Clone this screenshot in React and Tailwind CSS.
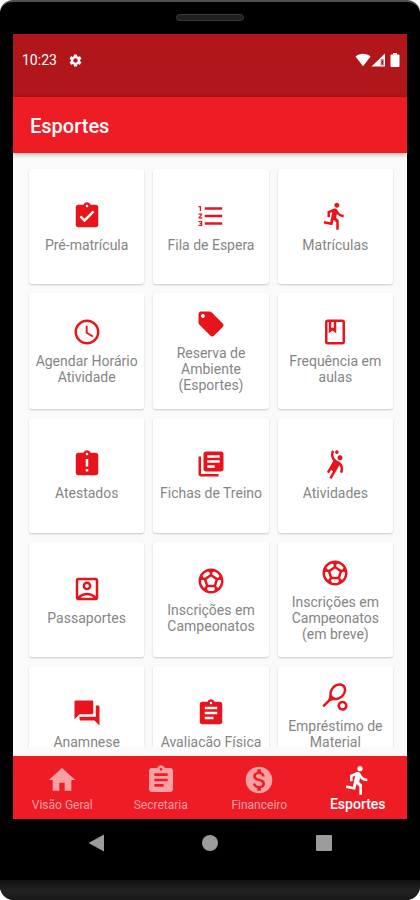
import React from "react";
import {
  MdAccessTime,
  MdAssignment,
  MdAssignmentLate,
  MdAssignmentTurnedIn,
  MdDirectionsRun,
  MdFormatListNumbered,
  MdHome,
  MdLibraryBooks,
  MdLocalOffer,
  MdMonetizationOn,
  MdOutlineAccountBox,
  MdOutlineClass,
  MdQuestionAnswer,
  MdSettings,
  MdSportsHandball,
  MdSportsSoccer,
  MdSportsTennis,
} from "react-icons/md";

const activities = [
  { label: "Pré-matrícula", Icon: MdAssignmentTurnedIn },
  { label: "Fila de Espera", Icon: MdFormatListNumbered },
  { label: "Matrículas", Icon: MdDirectionsRun },
  { label: "Agendar Horário Atividade", Icon: MdAccessTime },
  { label: "Reserva de Ambiente (Esportes)", Icon: MdLocalOffer },
  { label: "Frequência em aulas", Icon: MdOutlineClass },
  { label: "Atestados", Icon: MdAssignmentLate },
  { label: "Fichas de Treino", Icon: MdLibraryBooks },
  { label: "Atividades", Icon: MdSportsHandball },
  { label: "Passaportes", Icon: MdOutlineAccountBox },
  { label: "Inscrições em Campeonatos", Icon: MdSportsSoccer },
  { label: "Inscrições em Campeonatos (em breve)", Icon: MdSportsSoccer },
  { label: "Anamnese", Icon: MdQuestionAnswer },
  { label: "Avaliação Física", Icon: MdAssignment },
  { label: "Empréstimo de Material", Icon: MdSportsTennis, tall: true },
];

const tabs = [
  { label: "Visão Geral", Icon: MdHome },
  { label: "Secretaria", Icon: MdAssignment },
  { label: "Financeiro", Icon: MdMonetizationOn },
  { label: "Esportes", Icon: MdDirectionsRun, active: true },
];

function StatusBar() {
  return (
    <div className="flex h-[63px] shrink-0 items-start justify-between bg-[#b1161a] pt-4 pr-[7px] pl-[9px] text-white">
      <div className="flex h-5 items-center gap-[11px] text-sm">
        <span>10:23</span>
        <MdSettings size={15} aria-hidden="true" />
      </div>
      <div className="flex h-5 items-center" aria-hidden="true">
        <svg width="16" height="14" viewBox="0 0 16 14" fill="currentColor">
          <path d="M8 13.2 0.5 3.6C2.6 1.6 5.2 0.8 8 0.8s5.4 0.8 7.5 2.8z" />
        </svg>
        <svg width="15" height="14" viewBox="0 0 15 14" fill="currentColor">
          <path d="M0.5 13.5 14 0.5v13z" />
          <path d="M9.500 6h3.500v6.500H9.500z" fill="#d98a8c" />
          <path d="M10.500 7.500h1.500v4h-1.500z" fill="#b1161a" />
        </svg>
        <svg className="ml-1" width="10" height="14" viewBox="0 0 10 14" fill="currentColor">
          <path d="M3 0h4v1.500h1.500q1 0 1 1V13q0 1-1 1h-7q-1 0-1-1V2.500q0-1 1-1H3z" />
        </svg>
      </div>
    </div>
  );
}

function ActivityCard({ label, Icon, tall }) {
  return (
    <button
      type="button"
      className="flex aspect-square flex-col items-center justify-center gap-1.5 rounded-[3px] bg-white px-1 text-sm leading-4 text-[#858585] shadow-[0_1px_2px_rgba(0,0,0,0.2)]"
    >
      <Icon size={30} className="shrink-0 text-[#e8141b]" aria-hidden="true" />
      <span className={tall ? "min-h-12" : undefined}>{label}</span>
    </button>
  );
}

function TabBar() {
  return (
    <nav className="grid h-[63px] shrink-0 grid-cols-4 bg-[#ee1c25]">
      {tabs.map(({ label, Icon, active }) => (
        <button
          key={label}
          type="button"
          aria-current={active ? "page" : undefined}
          className={`flex flex-col items-center pt-2 ${active ? "text-sm font-medium text-white" : "gap-px text-xs text-[#f9a0a4]"}`}
        >
          <Icon size={32} className="shrink-0" aria-hidden="true" />
          <span className="leading-4">{label}</span>
        </button>
      ))}
    </nav>
  );
}

function SystemKeys() {
  return (
    <div className="flex h-12 shrink-0 items-center justify-between px-[75px] text-[#9b9b9b]">
      <button type="button" aria-label="Voltar">
        <svg width="16" height="18" viewBox="0 0 16 18" fill="currentColor">
          <path d="M16 0.500v17L0.500 9z" />
        </svg>
      </button>
      <button type="button" aria-label="Início" className="size-4 rounded-full bg-current" />
      <button type="button" aria-label="Recentes" className="size-4 rounded-[1px] bg-current" />
    </div>
  );
}

export default function App() {
  return (
    <div className="h-screen bg-white font-['Roboto',sans-serif]">
      <div className="flex h-full flex-col overflow-hidden rounded-t-[13px] rounded-b-[14px] border-t-2 border-[#515151] bg-black">
        <div className="flex h-[31px] shrink-0 items-center justify-center">
          <div className="h-[7px] w-[68px] rounded-full border border-[#3a3a3a] bg-[#202020]" />
        </div>

        <div className="mx-[13px] mt-px flex min-h-0 flex-1 flex-col">
          <StatusBar />
          <header className="z-10 flex h-14 shrink-0 items-center bg-[#ee1c25] px-[17px] pt-0.5 shadow-[0_1px_5px_rgba(0,0,0,0.35)]">
            <h1 className="text-xl font-medium text-white">Esportes</h1>
          </header>
          <main className="min-h-0 flex-1 bg-[#fafafa] px-3 pb-[9px]">
            <div className="h-full overflow-hidden pt-4 pr-0.5 pl-1">
              <div className="grid grid-cols-3 gap-[9px]">
                {activities.map((activity) => (
                  <ActivityCard key={activity.label} {...activity} />
                ))}
              </div>
            </div>
          </main>
          <TabBar />
          <SystemKeys />
        </div>

        <div className="mt-[13px] h-5 shrink-0 bg-linear-to-b from-[#111111] via-[#222222] to-[#191919]" />
      </div>
    </div>
  );
}
